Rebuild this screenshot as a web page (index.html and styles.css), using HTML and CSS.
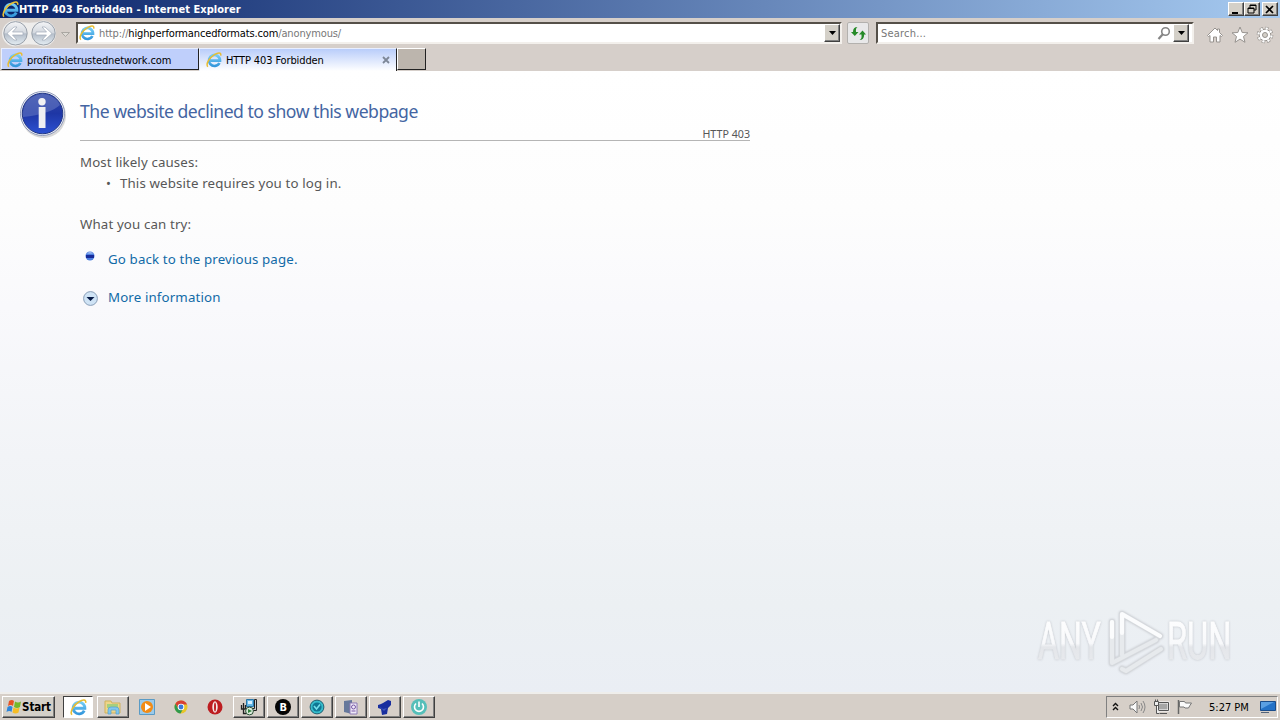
FILE: index.html
```
<!DOCTYPE html>
<html lang="en">
  <head>
    <meta charset="UTF-8" />
    <title>HTTP 403 Forbidden</title>
    <link rel="stylesheet" href="styles.css">
  </head>
  <body>
    <!-- shared icon -->
    <svg class="defs" width="0" height="0">
      <defs>
        <linearGradient id="ieBlue" x1="0" y1="0" x2="0" y2="1">
          <stop offset="0" stop-color="#74cdf6" />
          <stop offset="1" stop-color="#3497dc" />
        </linearGradient>
        <linearGradient id="navGlass" x1="0" y1="0" x2="0" y2="1">
          <stop offset="0" stop-color="#f4f5f7" />
          <stop offset="0.48" stop-color="#d3d8df" />
          <stop offset="0.52" stop-color="#b4bdc9" />
          <stop offset="1" stop-color="#e4edf3" />
        </linearGradient>
      </defs>
      <symbol id="ie" viewBox="0 0 16 16">
        <path d="M13.400 11A5.500 5.500 0 1 1 14 8.700H4.500" fill="none" stroke="url(#ieBlue)" stroke-width="2.700" />
        <path d="M1.800 14.800C-.5 12 3.500 5.500 8.500 2.600 12 .4 15.500.2 14.700 3.600" fill="none" stroke="#e9bd32" stroke-width="1.500" />
      </symbol>
    </svg>

    <div class="titlebar">
      <svg class="title-icon" width="17" height="17"><use href="#ie" /></svg>
      <span class="title-text">HTTP 403 Forbidden - Internet Explorer</span>
      <div class="window-buttons">
        <button class="win-button"><svg width="14" height="11"><path d="M3 8h6v2H3z" /></svg></button>
        <button class="win-button"><svg width="14" height="11"><path d="M5 1h6v5H9M5 1v3M5 1.500h6M3 4h6v5H3zM3 4.500h6" fill="none" stroke="#000" /></svg></button>
        <button class="win-button close"><svg width="14" height="11"><path d="M3 2l7 7M10 2l-7 7" stroke="#000" stroke-width="1.700" /></svg></button>
      </div>
    </div>

    <div class="navbar">
      <svg class="nav-arrows" width="76" height="29" viewBox="0 0 76 29">
        <path d="M15 1.500Q29 6 43 1.500A13 13 0 0 1 43 27.500Q29 23 15 27.500A13 13 0 0 1 15 1.500" fill="#eeedec" />
        <circle cx="15.500" cy="14.300" r="11.700" fill="url(#navGlass)" stroke="#98a0aa" />
        <circle cx="43.500" cy="14.300" r="11.700" fill="url(#navGlass)" stroke="#98a0aa" />
        <path d="M7 14.500l7-6.500h3l-4.500 5H23v3H12.500l4.500 5h-3z" fill="#fff" stroke="#a1abb8" stroke-width=".7" />
        <path d="M52 14.500l-7-6.500h-3l4.500 5H36v3h10.500l-4.500 5h3z" fill="#fff" stroke="#a1abb8" stroke-width=".7" />
        <path d="M61.500 13.500h8l-4 4z" fill="#dedbd6" stroke="#aaa7a2" />
      </svg>
      <div class="field address">
        <svg width="16" height="16"><use href="#ie" /></svg>
        <span class="url">http://<b>highperformancedformats.com</b>/anonymous/</span>
        <button class="drop"><svg width="7" height="4"><path d="M0 0h7L3.500 4z" /></svg></button>
      </div>
      <button class="refresh">
        <svg width="17" height="17" viewBox="0 0 17 17"><path d="M7.500 2Q5.500 3 6 7H8.500L4.800 11 1 7H3Q3 2 7.500 2M9.500 15Q12 14 11.500 9.500H9L12.500 5.500 16 9.500H14.200Q14 15 9.500 15" fill="#258a27" /></svg>
      </button>
      <div class="field search">
        <span class="hint">Search...</span>
        <svg width="14" height="15"><circle cx="8.500" cy="5.500" r="3.800" fill="none" stroke="#858585" stroke-width="1.600" /><path d="M6 8l-4.500 5" stroke="#858585" stroke-width="2.200" /></svg>
        <button class="drop"><svg width="7" height="4"><path d="M0 0h7L3.500 4z" /></svg></button>
      </div>
      <div class="tools">
        <svg width="18" height="18" viewBox="0 0 18 18"><path d="M1.500 9.500L9 2l2.500 2.500V3h2v3.500l3 3-1 1-1.500-1V16h-3.500v-5h-3v5H4V9.500l-1.500 1z" fill="#fff" stroke="#96928e" /></svg>
        <svg width="18" height="18" viewBox="0 0 18 18"><path d="M9 1l2.200 5.500 5.800.3-4.500 3.700 1.500 5.800-5-3.200-5 3.200 1.500-5.800L1 6.800l5.800-.3z" fill="#fff" stroke="#96928e" /></svg>
        <svg width="18" height="18" viewBox="0 0 18 18">
          <circle cx="9" cy="9" r="6.800" fill="none" stroke="#96928e" stroke-width="3" stroke-dasharray="3.200 2.140" />
          <circle cx="9" cy="9" r="5.800" fill="#fff" stroke="#96928e" />
          <circle cx="9" cy="9" r="6.600" fill="none" stroke="#fff" stroke-width="2.200" stroke-dasharray="2.200 2.984" stroke-dashoffset="-.4" />
          <circle cx="9" cy="9" r="2.500" fill="#d4d0c8" stroke="#96928e" />
        </svg>
      </div>
    </div>

    <div class="tabs">
      <div class="tab">
        <svg width="16" height="16"><use href="#ie" /></svg>
        <span class="tab-one">profitabletrustednetwork.com</span>
      </div>
      <div class="tab active">
        <svg width="16" height="16"><use href="#ie" /></svg>
        <span class="tab-two">HTTP 403 Forbidden</span>
        <svg class="tab-close" width="8" height="8"><path d="M1 1l6 6M7 1L1 7" stroke="#7d8797" stroke-width="1.800" /></svg>
      </div>
      <div class="new-tab"></div>
    </div>

    <div class="page">
      <svg class="info" width="50" height="50" viewBox="0 0 50 50">
        <defs>
          <linearGradient id="infoBlue" x1="0" y1="0" x2="0" y2="1">
            <stop offset="0" stop-color="#3449a8" />
            <stop offset=".5" stop-color="#1e36a5" />
            <stop offset="1" stop-color="#2c51d2" />
          </linearGradient>
        </defs>
        <circle cx="25.500" cy="25.500" r="22.500" fill="#aaa" opacity=".45" />
        <circle cx="24.500" cy="23.500" r="22" fill="#f5f6fa" stroke="#8e99ba" />
        <circle cx="24.500" cy="23.500" r="20.300" fill="url(#infoBlue)" stroke="#223784" />
        <path d="M5 25A19.500 19.500 0 0 1 42 15Q32 24 5 27z" fill="#8293d0" opacity=".4" />
        <circle cx="24" cy="11.700" r="3.700" fill="#f1f1f4" />
        <path d="M20.700 17h6.800V38h-6.800z" fill="#eeeef2" />
      </svg>
      <div class="content">
        <h1>The website declined to show this webpage</h1>
        <div class="code">HTTP 403</div>
        <p class="causes">Most likely causes:</p>
        <ul>
          <li>This website requires you to log in.</li>
        </ul>
        <p class="try">What you can try:</p>
        <div class="action">
          <svg class="ball" width="10" height="10"><circle cx="5" cy="5" r="4.500" fill="#4d7fe0" /><path d="M1 4h8v3H1z" fill="#172b99" /><path d="M2 2.500Q5 0 8 2.500z" fill="#bad0f5" /></svg>
          <a class="back">Go back to the previous page.</a>
        </div>
        <div class="action more">
          <svg class="expand" width="16" height="16"><circle cx="8.500" cy="8.500" r="6.900" fill="#cfe3f5" stroke="#8a9fb8" /><path d="M4.500 7h8L8.500 11z" fill="#071b46" /></svg>
          <a class="info-link">More information</a>
        </div>
      </div>

      <!-- watermark -->
      <svg class="watermark" width="230" height="76" viewBox="0 0 230 76">
        <defs>
          <linearGradient id="mark" x1="0" y1="0" x2="0" y2="1">
            <stop offset="0" stop-color="#fff" />
            <stop offset=".54" stop-color="#f8f9fb" />
            <stop offset=".6" stop-color="#e4e6ea" />
            <stop offset="1" stop-color="#eaecef" />
          </linearGradient>
        </defs>
        <g class="mark-text">
          <text transform="translate(8 56) scale(.63 1)">ANY</text>
          <text transform="translate(137 56) scale(.64 1)">RUN</text>
        </g>
        <g class="mark-logo" fill="none" stroke-linecap="round" stroke-linejoin="round">
          <path d="M82 19v41l44-23M92 52V11l38 22M92 66l4 2 35-22" stroke="#d6d9dd" stroke-width="6" />
          <path d="M82 19v41l44-23M92 52V20M92 66l4 2 35-22" stroke="#e7eaed" stroke-width="4" />
          <path d="M92 30V11l38 22M82 19v15" stroke="#fbfcfd" stroke-width="4.200" />
        </g>
      </svg>
    </div>

    <div class="taskbar">
      <button class="start">
        <svg width="16" height="16" viewBox="0 0 16 16"><path d="M3 2q3-2 5 0L7 7Q5 5 2 7z" fill="#e75324" /><path d="M9 2.500q3 2 6 0L14 8q-3 2-6 0z" fill="#75b82b" /><path d="M1.500 8q3-2 5 0l-1 5q-2-2-5 0z" fill="#2d86dc" /><path d="M7.500 8.500q3 2 6 0l-1 5q-3 2-6 0z" fill="#f6bd25" /></svg>
        <span>Start</span>
      </button>
      <div class="task pressed"><svg width="17" height="17"><use href="#ie" /></svg></div>
      <div class="task raised explorer">
        <svg width="18" height="18" viewBox="0 0 18 18"><path d="M1 3h6l1 2h8v10H1z" fill="#eed58a" stroke="#cfb15d" /><path d="M3 6h11v4H3z" fill="#a6cf7e" /><path d="M4 16v-4q0-3 3-3h5q3 0 3 3v4h-3v-4H7v4z" fill="#81c6ee" stroke="#50a1cf" stroke-width=".7" /></svg>
      </div>
      <div class="task">
        <svg width="16" height="16"><path d="M.5.500h15v15H.5z" fill="#9bcaea" stroke="#5a9bc5" /><circle cx="8" cy="8" r="6" fill="#f28b15" /><path d="M6 4l6 4-6 4z" fill="#fff" /></svg>
      </div>
      <div class="task">
        <svg width="16" height="16" viewBox="0 0 16 16"><circle cx="8" cy="8" r="6.500" fill="#e8c629" /><path d="M2.400 4.700A6.500 6.500 0 0 1 14 5.500H8L5.500 10z" fill="#d74034" /><path d="M2.400 4.700A6.500 6.500 0 0 0 7.500 14.500L10 10H5.500z" fill="#30994d" /><circle cx="8" cy="8" r="3.300" fill="#fff" /><circle cx="8" cy="8" r="2.400" fill="#3979d9" /></svg>
      </div>
      <div class="task">
        <svg width="16" height="16"><circle cx="8" cy="8" r="7.500" fill="#bd1d20" /><ellipse cx="8" cy="8" rx="2.700" ry="5.700" fill="#f5e9e8" /><ellipse cx="8" cy="8" rx="1" ry="4.600" fill="#c02124" /></svg>
      </div>
      <div class="task raised">
        <svg width="18" height="18"><path d="M14.500 1.500h2v11h-4v-2h2z" fill="#c9c9c9" stroke="#222" /><path d="M6.500 1.500h7v7h-7z" fill="#65b7e6" stroke="#2876a8" /><path d="M8 3h4v3H8z" fill="#d5efff" /><path d="M3.500 5v10.500H6M1.500 7v4h4V7" fill="none" stroke="#222" stroke-width="1.300" /><circle cx="9.500" cy="13" r="3.900" fill="#dcecdc" stroke="#294d35" /><path d="M8 11l4 2-4 2z" fill="#31813b" /></svg>
      </div>
      <div class="task raised">
        <svg width="18" height="18"><circle cx="9" cy="9" r="8" fill="#050505" /><text class="letter" x="5.500" y="13">B</text></svg>
      </div>
      <div class="task raised">
        <svg width="16" height="16"><circle cx="8" cy="8" r="6.900" fill="#35bccb" stroke="#245e70" /><circle cx="8" cy="8" r="4.600" fill="#0f7693" /><path d="M5 7l2.500 3L11 5.500" fill="none" stroke="#75e1ec" stroke-width="1.600" /></svg>
      </div>
      <div class="task raised">
        <svg width="16" height="17"><path d="M1 2l8-1v14l-8-2z" fill="#66789b" /><path d="M7 4h7v11H7z" fill="#eee9f7" stroke="#8d7bb5" /><circle cx="10.500" cy="8" r="2" fill="none" stroke="#7656a5" /><path d="M8.500 12h4" stroke="#7656a5" /></svg>
      </div>
      <div class="task raised">
        <svg width="17" height="17"><path d="M6 4l5-3 3 1 0 4-3 3-1 6-5 1-1-6-3-1 0-3 3-1z" fill="#192f9f" /><path d="M2 7l4 3 4-1-3 3z" fill="#4057bc" /></svg>
      </div>
      <div class="task raised">
        <svg width="20" height="18"><circle cx="10" cy="9" r="8" fill="#55bfb9" /><path d="M7 5.500a4.500 4.500 0 1 0 6 0M10 3.500V9" fill="none" stroke="#fff" stroke-width="1.600" /></svg>
      </div>
      <div class="tray">
        <svg class="chevrons" width="7" height="10"><path d="M1 4l2.500-2.500L6 4M1 8l2.500-2.500L6 8" fill="none" stroke="#111" stroke-width="1.400" /></svg>
        <svg width="17" height="16"><path d="M1 6h3l4-4v12l-4-4H1z" fill="#f9f9f9" stroke="#777" /><path d="M10 6q1 2 0 4M12 4q3 4 0 8M14 2q4 6 0 12" fill="none" stroke="#888" /></svg>
        <svg class="network" width="17" height="16"><path d="M4.500 3.500h11v8h-11z" fill="#a6a6a6" stroke="#fff" stroke-width="2" /><path d="M5.500 3.500h10v8h-10zM7 14.500h7" fill="none" stroke="#555" /><path d="M1.500 2.500h4v4h-4zM2.500.500v2M4.500.500v2M3.500 6.500v8h3" fill="#eee" stroke="#555" /></svg>
        <svg class="flag" width="16" height="16"><path d="M1.500 1v14" stroke="#666" stroke-width="1.500" /><path d="M2.500 2.500h5l1 1.500h6q-2 3-3 5H8l-1-1H2.500z" fill="#fafafa" stroke="#777" /></svg>
        <span class="clock">5:27 PM</span>
        <svg class="desktop" width="17" height="14"><path d="M.5 1.500h15v9H.5z" fill="#2472c7" stroke="#1a4c8a" /><path d="M1 2h13L1 9z" fill="#5a9fe3" /><path d="M1 12.500h8" stroke="#526278" /></svg>
      </div>
    </div>
  </body>
</html>
```
FILE: styles.css
```
* {
  box-sizing: border-box;
}

body {
  margin: 0;
  width: 1280px;
  height: 720px;
  overflow: hidden;
  display: flex;
  flex-direction: column;
  background-color: #d6cfc8;
  font-family: "DejaVu Sans Condensed", "DejaVu Sans", sans-serif;
  font-size: 11px;
  color: #000;
}

svg {
  display: block;
  flex: none;
}

.defs {
  position: absolute;
}

button {
  padding: 0;
  display: flex;
  align-items: center;
  justify-content: center;
  background-color: #d4d0c8;
  border: 1px solid;
  border-color: #fff #404040 #404040 #fff;
  box-shadow: inset -1px -1px #808080;
  font: inherit;
  flex: none;
}

span {
  white-space: nowrap;
}

.titlebar {
  height: 18px;
  flex: none;
  display: flex;
  align-items: center;
  padding: 0 2px;
  background: linear-gradient(to right, #0a246a, #a6caf0);
  color: #fff;
}

.title-text {
  font-weight: bold;
  letter-spacing: 0.04px;
}

.window-buttons {
  margin-left: auto;
  display: flex;
}

.win-button {
  width: 16px;
  height: 14px;
}

.close {
  margin-left: 2px;
}

.navbar {
  height: 30px;
  flex: none;
  display: flex;
  align-items: center;
  background-color: #d6cfca;
}

.field {
  height: 22px;
  display: flex;
  align-items: center;
  background-color: #fff;
  border: 2px solid;
  border-color: #555049 #f3f0ec #f3f0ec #555049;
}

.address {
  width: 766px;
  padding-left: 1px;
}

.url,
.hint {
  color: #777;
}

.url {
  margin-left: 4px;
  padding-top: 1px;
  letter-spacing: -0.14px;
}

.url b {
  font-weight: normal;
  color: #000;
}

.drop {
  width: 16px;
  height: 18px;
  margin-left: auto;
}

.refresh {
  width: 22px;
  height: 22px;
  margin: 0 7px 0 5px;
  background-color: #e8e8e9;
  border-color: #b3b1ae;
  border-radius: 2px;
  box-shadow: none;
}

.search {
  width: 318px;
  padding: 0 3px;
}

.hint {
  margin-right: auto;
  padding-top: 1px;
  letter-spacing: 0.2px;
}

.search .drop {
  margin-left: 2px;
}

.tools {
  display: flex;
  gap: 7px;
  margin: 4px 0 0 12px;
}

.tabs {
  height: 23px;
  flex: none;
  display: flex;
  background-color: #d6cfca;
  padding-left: 1px;
}

.tab {
  height: 22px;
  width: 198px;
  display: flex;
  align-items: center;
  gap: 4px;
  padding: 2px 6px 0 5px;
  background-color: #bfcffb;
  border: 1px solid #e9efff;
  border-right: 1px solid #222;
  border-bottom-color: #222;
}

.tab-one,
.tab-two {
  letter-spacing: -0.12px;
}

.active {
  height: 23px;
  background: linear-gradient(#b9cdfa, #fff);
  border-bottom: none;
  width: 198px;
  padding: 0 6px 0 6px;
}

.tab-close {
  margin-left: auto;
}

.new-tab {
  width: 29px;
  height: 22px;
  background-color: #bcb5ad;
  border: 1px solid #fff;
  border-right: 1px solid #222;
  border-bottom: 1px solid #222;
}

.page {
  position: relative;
  height: 621px;
  flex: none;
  display: flex;
  background: linear-gradient(#fff 0, #fdfdfd 22%, #f9f9fc 38%, #f2f4f7 62%, #ecf0f3 86%, #eaeef4 100%);
  font-family: "Noto Sans", "Open Sans", sans-serif;
}

.info {
  margin: 19px 12px 0 18px;
}

.content {
  width: 670px;
  font-size: 13.300px;
  letter-spacing: 0.13px;
  color: #575757;
}

h1 {
  height: 55px;
  margin: 0;
  padding-top: 27px;
  color: #4465a2;
  font-size: 17.600px;
  line-height: 26px;
  font-weight: normal;
  letter-spacing: -0.5px;
}

.code {
  height: 15px;
  border-bottom: 1px solid #b5b5b5;
  text-align: right;
  font-size: 10.700px;
  letter-spacing: 0;
  line-height: 17px;
}

p,
ul {
  margin: 0;
  line-height: 20px;
}

.causes {
  margin-top: 11px;
}

ul {
  margin-top: 1px;
  padding-left: 40px;
  list-style: none;
}

li::before {
  content: "•";
  float: left;
  margin-left: -14px;
  font-size: 13px;
}

.try {
  margin-top: 21px;
}

.action {
  display: flex;
  align-items: center;
  height: 20px;
  margin-top: 15px;
  color: #116aa7;
}

.ball {
  margin: -7px 13px 0 5px;
}

.more {
  margin-top: 18px;
}

.expand {
  margin: 1px 10px 0 2px;
}

.watermark {
  position: absolute;
  left: 1030px;
  top: 532px;
  filter: drop-shadow(0 0 1px #c0c3c9);
}

.mark-text {
  font-family: Roboto, sans-serif;
  font-size: 51px;
  fill: url(#mark);
  stroke: url(#mark);
  stroke-width: 0.8px;
}

.taskbar {
  height: 28px;
  flex: none;
  display: flex;
  align-items: center;
  padding: 1px 2px 1px;
  border-top: 2px solid #efeeeb;
}

.start {
  width: 53px;
  height: 22px;
  margin-right: 8px;
  gap: 0;
  font-size: 11.500px;
  font-weight: bold;
}

.start span {
  letter-spacing: -0.1px;
}

.task {
  width: 32px;
  height: 22px;
  margin-right: 2px;
  flex: none;
  display: flex;
  align-items: center;
  justify-content: center;
}

.raised {
  border: 1px solid;
  border-color: #fff #404040 #404040 #fff;
  box-shadow: inset -1px -1px #808080;
}

.pressed {
  width: 30px;
  margin-right: 4px;
  background-color: #fff;
  border: 1px solid;
  border-color: #404040 #fff #fff #404040;
}

.letter {
  fill: #fff;
  font-weight: bold;
}

.tray {
  width: 172px;
  height: 22px;
  margin-left: auto;
  padding: 0 0 0 5px;
  display: flex;
  align-items: center;
  border: 1px solid;
  border-color: #808080 #fff #fff #808080;
}

.chevrons {
  margin-right: 10px;
}

.network,
.flag {
  margin-left: 7px;
}

.clock {
  margin-left: 16px;
}

.desktop {
  margin-left: auto;
}
```
